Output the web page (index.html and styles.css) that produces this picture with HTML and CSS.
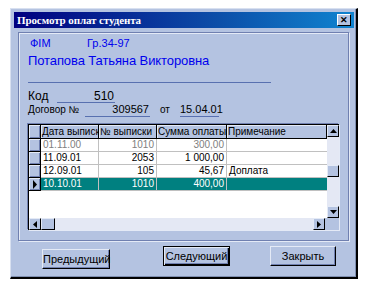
FILE: index.html
```html
<!DOCTYPE html>
<html>
<head>
<meta charset="utf-8">
<link rel="stylesheet" href="styles.css">
</head>
<body>
<div class="window">
  <div class="titlebar">
    <span class="title">Просмотр оплат студента</span>
    <span class="close">✕</span>
  </div>
  <div class="content">
    <div class="group">
      <div class="fio-row"><span class="fio-label">ФІМ</span><span class="fio-group">Гр.34-97</span></div>
      <div class="name">Потапова Татьяна Викторовна</div>
      <div class="sep"></div>
      <div class="kod-row"><span class="kod-label">Код</span><span class="field kod-val">510</span></div>
      <div class="dog-row"><span class="dog-label">Договор №</span><span class="field dog-val">309567</span><span class="ot">от</span><span class="field date-val">15.04.01</span></div>
      <div class="grid">
        <div class="grid-main">
          <div class="grid-body">
            <div class="row head">
              <div class="ind"></div>
              <div class="c c1">Дата выписки</div>
              <div class="c c2">№ выписки</div>
              <div class="c c3">Сумма оплаты</div>
              <div class="c c4">Примечание</div>
            </div>
            <div class="row gray">
              <div class="ind"></div>
              <div class="c c1">01.11.00</div>
              <div class="c c2 r">1010</div>
              <div class="c c3 r">300,00</div>
              <div class="c c4"></div>
            </div>
            <div class="row">
              <div class="ind"></div>
              <div class="c c1">11.09.01</div>
              <div class="c c2 r">2053</div>
              <div class="c c3 r">1 000,00</div>
              <div class="c c4"></div>
            </div>
            <div class="row">
              <div class="ind"></div>
              <div class="c c1">12.09.01</div>
              <div class="c c2 r">105</div>
              <div class="c c3 r">45,67</div>
              <div class="c c4">Доплата</div>
            </div>
            <div class="row sel">
              <div class="ind cur"><svg width="6" height="9" viewBox="0 0 6 9"><path d="M1 0 L5 4.5 L1 9 Z" fill="#000"/></svg></div>
              <div class="c c1">10.10.01</div>
              <div class="c c2 r">1010</div>
              <div class="c c3 r">400,00</div>
              <div class="c c4"></div>
            </div>
            <div class="empty"></div>
          </div>
          <div class="vscroll">
            <div class="sbtn"><svg width="7" height="4" viewBox="0 0 7 4"><path d="M0 4 L3.5 0 L7 4 Z" fill="#000"/></svg></div>
            <div class="track"><div class="thumb"></div></div>
            <div class="sbtn"><svg width="7" height="4" viewBox="0 0 7 4"><path d="M0 0 L3.5 4 L7 0 Z" fill="#000"/></svg></div>
          </div>
        </div>
        <div class="hscroll">
          <div class="sbtn"><svg width="4" height="7" viewBox="0 0 4 7"><path d="M4 0 L0 3.5 L4 7 Z" fill="#000"/></svg></div>
          <div class="hthumb"></div>
          <div class="htrack"></div>
          <div class="sbtn"><svg width="4" height="7" viewBox="0 0 4 7"><path d="M0 0 L4 3.5 L0 7 Z" fill="#000"/></svg></div>
          <div class="corner"></div>
        </div>
      </div>
    </div>
    <div class="buttons">
      <div class="btn prev">Предыдущий</div>
      <div class="btn next">Следующий</div>
      <div class="btn close-btn">Закрыть</div>
    </div>
  </div>
</div>
</body>
</html>
```
FILE: styles.css
```css
html, body {
  margin: 0;
  padding: 0;
  background: #ffffff;
}
body {
  padding: 8px 0 0 10px;
  font-family: "Liberation Sans", Arial, sans-serif;
  font-size: 11px;
}
.window {
  background: #b4c3e1;
  border-top: 1px solid #d8e0f0;
  border-left: 1px solid #d8e0f0;
  border-right: 2px solid #000;
  border-bottom: 2px solid #000;
  box-shadow: inset -1px -1px 0 #7f8fb0;
  padding: 3px 2px 0 3px;
  box-sizing: border-box;
  width: 348px;
  height: 271px;
}
.titlebar {
  height: 16px;
  background: linear-gradient(to right, #000080 0%, #0c4ea8 60%, #1084d0 100%);
  display: flex;
  align-items: center;
  justify-content: space-between;
  padding: 0 3px 0 3px;
}
.title {
  color: #fff;
  font-family: "Liberation Serif", "Times New Roman", serif;
  font-weight: bold;
  font-size: 11px;
  letter-spacing: -0.1px;
}
.close {
  width: 14px;
  height: 12px;
  background: #b4c3e1;
  border-top: 1px solid #fff;
  border-left: 1px solid #fff;
  border-right: 1px solid #000;
  border-bottom: 1px solid #000;
  box-sizing: border-box;
  font-size: 9px;
  line-height: 10px;
  text-align: center;
  font-weight: bold;
  color: #000;
}
.content {
  padding: 4px 5px 0 4px;
}
.group {
  height: 209px;
  border: 1px solid #7080b0;
  box-shadow: 1px 1px 0 #e4eaf6, inset 1px 1px 0 #e4eaf6;
  padding: 3px 10px 0 9px;
  box-sizing: border-box;
}
.fio-row {
  color: #0000ee;
  height: 14px;
  line-height: 14px;
  display: flex;
}
.fio-label { width: 57px; padding-left: 2px; }
.name {
  color: #0000ee;
  font-size: 13px;
  height: 17px;
  line-height: 17px;
  margin-top: 2px;
  letter-spacing: -0.1px;
}
.sep {
  width: 243px;
  border-top: 1px solid #5870b0;
  margin-top: 13px;
}
.kod-row {
  display: flex;
  margin-top: 6px;
  height: 14px;
  line-height: 14px;
  font-size: 12px;
}
.kod-label { width: 29px; }
.field {
  border-bottom: 1px solid #5870b0;
  text-align: right;
  box-sizing: border-box;
  padding-right: 1px;
}
.kod-val { width: 58px; }
.dog-row {
  display: flex;
  margin-top: 0;
  height: 14px;
  line-height: 13px;
  font-size: 10px;
}
.dog-label { width: 57px; }
.dog-val { width: 65px; font-size: 11px; }
.ot { width: 30px; text-align: center; }
.date-val { width: 39px; font-size: 11px; }

.grid {
  margin-top: 7px;
  width: 310px;
  border-top: 1px solid #000;
  border-left: 1px solid #000;
  box-shadow: -1px -1px 0 #7080b0, 1px 1px 0 #e4eaf6;
  background: #dde3f1;
  font-size: 10px;
}
.grid-main {
  display: flex;
  height: 93px;
}
.grid-body {
  flex: 1;
  background: #fff;
  display: flex;
  flex-direction: column;
  overflow: hidden;
}
.row {
  display: flex;
  height: 13px;
  line-height: 12px;
  border-bottom: 1px solid #c0c0c0;
  box-sizing: border-box;
}
.row .ind {
  width: 11px;
  flex: none;
  background: #b4c3e1;
  border-right: 1px solid #000;
  box-shadow: inset 1px 1px 0 #e4eaf6, inset -1px -1px 0 #7080b0;
  border-bottom: 1px solid #000;
  margin-bottom: -1px;
  display: flex;
  align-items: center;
  justify-content: center;
}
.c {
  border-right: 1px solid #c0c0c0;
  padding: 0 2px;
  white-space: nowrap;
  overflow: hidden;
  box-sizing: border-box;
  flex: none;
}
.c1 { width: 58px; }
.c2 { width: 58px; }
.c3 { width: 70px; }
.c4 { width: 100px; border-right: none; }
.r { text-align: right; }
.head {
  height: 14px;
  line-height: 13px;
  border-bottom: 1px solid #000;
}
.head .c {
  background: #b4c3e1;
  border-right: 1px solid #000;
  box-shadow: inset 1px 1px 0 #e4eaf6;
  padding: 0 1px;
  text-overflow: clip;
}
.gray { color: #808080; }
.sel .c {
  background: #008080;
  color: #fff;
  border-right-color: #c0c0c0;
}
.sel .c4 { border-right: none; }
.empty { flex: 1; background: #fff; }

.vscroll {
  width: 12px;
  display: flex;
  flex-direction: column;
  background: #e4e8f4;
}
.sbtn {
  width: 12px;
  height: 12px;
  flex: none;
  background: #b4c3e1;
  border-top: 1px solid #e4eaf6;
  border-left: 1px solid #e4eaf6;
  border-right: 1px solid #000;
  border-bottom: 1px solid #000;
  box-sizing: border-box;
  display: flex;
  align-items: center;
  justify-content: center;
}
.track {
  flex: 1;
  background: #e4e8f4;
}
.thumb {
  margin-top: 28px;
  height: 12px;
  background: #b4c3e1;
  border-top: 1px solid #e4eaf6;
  border-left: 1px solid #e4eaf6;
  border-right: 1px solid #000;
  border-bottom: 1px solid #000;
  box-sizing: border-box;
}
.hscroll {
  display: flex;
  height: 12px;
  background: #e4e8f4;
}
.hthumb {
  width: 14px;
  height: 12px;
  background: #b4c3e1;
  border-top: 1px solid #e4eaf6;
  border-left: 1px solid #e4eaf6;
  border-right: 1px solid #000;
  border-bottom: 1px solid #000;
  box-sizing: border-box;
}
.htrack { flex: 1; }
.corner { width: 14px; background: #b4c3e1; }

.buttons {
  display: flex;
  height: 30px;
}
.btn {
  height: 20px;
  line-height: 18px;
  text-align: center;
  background: #b4c3e1;
  border-top: 1px solid #e4eaf6;
  border-left: 1px solid #e4eaf6;
  border-right: 1px solid #000;
  border-bottom: 1px solid #000;
  box-shadow: inset -1px -1px 0 #7080b0;
  box-sizing: border-box;
  font-size: 11px;
}
.prev {
  width: 68px;
  margin: 8px 0 0 24px;
}
.next {
  width: 67px;
  margin: 5px 0 0 53px;
  border: 1px solid #000;
  box-shadow: inset 1px 1px 0 #e4eaf6, inset -1px -1px 0 #000, inset -2px -2px 0 #7080b0;
}
.close-btn {
  width: 66px;
  margin: 5px 0 0 40px;
}
```
